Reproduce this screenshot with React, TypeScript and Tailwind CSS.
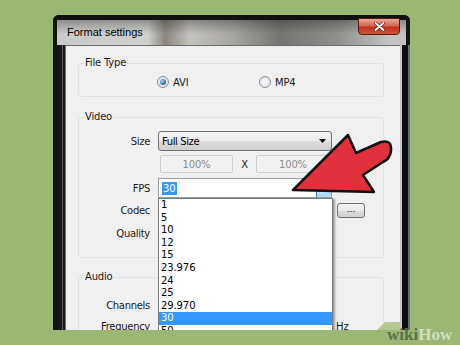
import React from "react";

function Radio({ checked }: { checked?: boolean }) {
  return (
    <span className="w-[12px] h-[12px] shrink-0 rounded-full border border-[#8a8f96] bg-[radial-gradient(circle,#fbfbfb,#d6dadf)] flex items-center justify-center">
      {checked ? (
        <span className="w-[6px] h-[6px] rounded-full bg-[radial-gradient(circle_at_35%_35%,#a9d8f7,#1d5c9c_75%)]" />
      ) : null}
    </span>
  );
}

function Row({ label, children, className }: { label: string; children?: React.ReactNode; className?: string }) {
  return (
    <div className={"flex items-center h-[20px] " + (className ?? "")}>
      <span className="w-[71px] text-right text-[10px] tracking-[-0.3px] text-[#1a1a1a]">{label}</span>
      <div className="ml-[8px] flex items-center">{children}</div>
    </div>
  );
}

function Group({ label, className, children }: { label: string; className: string; children?: React.ReactNode }) {
  return (
    <div className={"relative border border-[#dce3e8] rounded-[3px] " + className}>
      <span className="absolute left-[5px] top-[-7px] leading-[12px] px-[1px] bg-[#f0f0f0] text-[10px] tracking-[-0.2px] text-[#1a1a1a]">
        {label}
      </span>
      {children}
    </div>
  );
}

export default function App() {
  const fps = ["1", "5", "10", "12", "15", "23.976", "24", "25", "29.970", "30", "50"];
  return (
    <div className="relative w-[460px] h-[345px] overflow-hidden bg-[#9cb674] font-['DejaVu_Sans',sans-serif]">
      {/* window */}
      <div className="absolute left-[53px] top-[15px] w-[357px] h-[315px] flex flex-col bg-[#141414] rounded-t-[6px] overflow-hidden">
        <div className="h-[5px] shrink-0 bg-[#111]" />
        <div className="relative h-[25px] shrink-0 mx-[4px] flex items-center bg-[linear-gradient(90deg,#c9c9c7_0%,#cfcfcd_26%,#8a847d_31%,#c3c2be_38%,#a7a6a2_50%,#757573_64%,#8e8e8c_80%,#c3c3c1_95%)]">
          <div className="absolute inset-0 bg-[linear-gradient(180deg,rgba(30,30,30,0.35)_0%,rgba(30,30,30,0)_55%)]" />
          <span className="relative ml-[10px] text-[11px] font-['Liberation_Sans',sans-serif] text-black">Format settings</span>
          <div className="absolute left-[301px] top-[-2px] w-[42px] h-[17px] border border-[#5b1a10] rounded-b-[4px] bg-[linear-gradient(180deg,#eaa99c_0%,#d6654f_45%,#bf311b_55%,#cc5740_100%)] flex items-center justify-center">
            <svg width="11" height="9" viewBox="0 0 11 9">
              <path d="M1.5 1 L9.5 8 M9.5 1 L1.5 8" stroke="#5a1a12" strokeWidth="3.2" strokeLinecap="round" />
              <path d="M1.5 1 L9.5 8 M9.5 1 L1.5 8" stroke="#ffffff" strokeWidth="1.8" strokeLinecap="round" />
            </svg>
          </div>
        </div>
        <div className="flex flex-1 min-h-0">
          <div className="w-[12px] shrink-0 bg-[linear-gradient(90deg,#0e0e0e_0,#1a1a1a_9px,#5c5c5c_9px,#5c5c5c_10px,#1a1a1a_10px)]" />
          <div className="relative w-[335px] shrink-0 bg-[#f0f0f0] overflow-hidden pl-[13px] pr-[16px] pt-[18px] shadow-[inset_1px_1px_0_#6b6b6b]">
            <Group label="File Type" className="h-[34px]">
              <div className="flex items-center h-full pt-[4px] pl-[78px] text-[10px] tracking-[-0.2px] text-[#1a1a1a]">
                <div className="w-[102px] flex items-center gap-[4px]">
                  <Radio checked />
                  <span>AVI</span>
                </div>
                <div className="flex items-center gap-[4px]">
                  <Radio />
                  <span>MP4</span>
                </div>
              </div>
            </Group>

            <Group label="Video" className="mt-[20px] h-[141px]">
              <div className="flex flex-col pt-[13px]">
                <Row label="Size">
                  <div className="relative w-[174px] h-[20px] border border-[#707070] rounded-[3px] bg-[linear-gradient(180deg,#f3f3f3_0%,#ebebeb_50%,#dddddd_50%,#cfcfcf_100%)] flex items-center pl-[3px] text-[10px] tracking-[-0.4px] text-black">
                    Full Size
                    <svg className="absolute right-[5px] top-[7px]" width="7" height="4" viewBox="0 0 7 4">
                      <path d="M0 0 H7 L3.5 4 Z" fill="#000" />
                    </svg>
                  </div>
                </Row>
                <div className="flex items-center h-[18px] mt-[4px] text-[10px] tracking-[-0.2px]">
                  <div className="ml-[81px] w-[73px] h-[18px] border border-[#cfcfcf] rounded-[2px] bg-[#f2f2f2] flex items-center justify-center text-[#8c8c8c]">100%</div>
                  <div className="w-[23px] text-center text-[#1a1a1a]">X</div>
                  <div className="w-[74px] h-[18px] border border-[#cfcfcf] rounded-[2px] bg-[#f2f2f2] flex items-center justify-center text-[#8c8c8c]">100%</div>
                </div>
                <Row label="FPS" className="mt-[5px]">
                  <div className="relative w-[174px] h-[20px] border border-[#9a9da3] bg-white flex items-center pl-[3px] text-[10px]">
                    <span className="bg-[#3399ff] text-white px-[1px] leading-[13px]">30</span>
                    <div className="absolute right-0 top-0 w-[15px] h-full border-l border-[#3c7fb1] bg-[linear-gradient(180deg,#e5f4fc,#a7d9f5)]" />
                  </div>
                </Row>
                <Row label="Codec" className="mt-[2px]">
                  <div className="w-[174px] h-[20px] border border-[#707070] rounded-[3px] bg-[#e6e6e6]" />
                  <div className="ml-[5px] w-[28px] h-[15px] border border-[#707070] rounded-[3px] bg-[linear-gradient(180deg,#f3f3f3_0%,#ebebeb_50%,#dddddd_50%,#cfcfcf_100%)] flex items-center justify-center text-[9px] leading-[9px] text-black pb-[2px]">
                    ...
                  </div>
                </Row>
                <Row label="Quality" className="mt-[3px]" />
              </div>
            </Group>

            <Group label="Audio" className="mt-[19px] h-[80px]">
              <div className="flex flex-col pt-[17px]">
                <Row label="Channels">
                  <div className="w-[174px] h-[20px]" />
                </Row>
                <Row label="Frequency" className="mt-[1px]">
                  <div className="w-[174px] h-[20px]" />
                  <span className="ml-[4px] text-[10px] text-[#1a1a1a]">Hz</span>
                </Row>
              </div>
            </Group>

            {/* open FPS list */}
            <div className="absolute left-[93px] top-[153px] w-[175px] h-[150px] bg-white border border-[#7a7a7a] shadow-[2px_1px_2px_rgba(0,0,0,0.35)] flex flex-col">
              {fps.map((v) => (
                <div
                  key={v}
                  className={
                    "shrink-0 h-[12.6px] leading-[12.6px] pl-[2px] text-[10px] tracking-[-0.1px] " +
                    (v === "30" ? "bg-[#3399ff] text-white" : "text-black")
                  }
                >
                  {v}
                </div>
              ))}
            </div>
          </div>
          <div className="w-[10px] shrink-0 bg-[linear-gradient(90deg,#c6c6c6_0,#c6c6c6_2px,#0f0f0f_2px,#0f0f0f_8px,#6a6a6a_8px)]" />
        </div>
      </div>

      {/* red arrow and watermark backing */}
      <svg className="absolute left-0 top-0 pointer-events-none" width="460" height="345" viewBox="0 0 460 345">
        <polygon points="377,330 385,322 400,322 400,330" fill="#b3c78f" />
        <path
          d="M293,190 L348,135 L356,153 L381,142 Q392,139 391,151 Q390,159 383,162 L363,175 L374,192 Z"
          fill="#e1303c"
          stroke="#111"
          strokeWidth="2.5"
          strokeLinejoin="round"
        />
      </svg>

      <div className="absolute left-[387px] top-[326px] leading-[17px] text-[17px] font-bold font-['Liberation_Serif',serif]">
        <span className="text-[#5b7348]">wiki</span>
        <span className="text-[#d3dfbf]">How</span>
      </div>
    </div>
  );
}
